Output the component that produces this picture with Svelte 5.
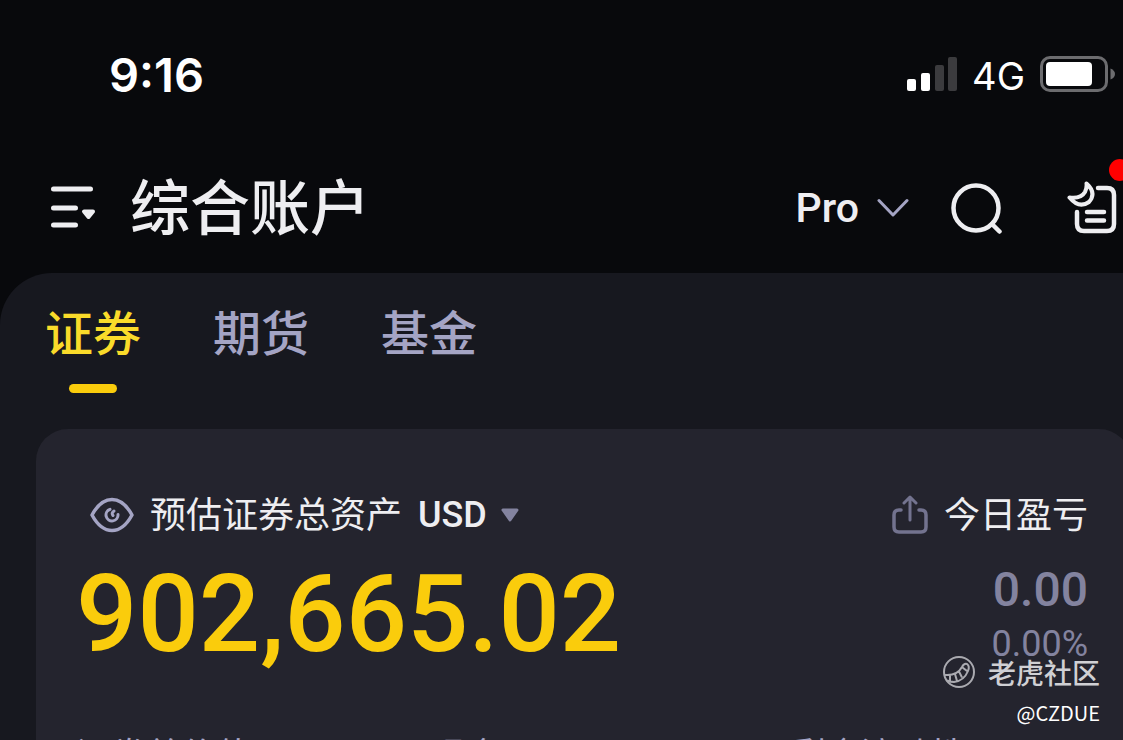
<script lang="ts">
  const tabs = ['证券', '期货', '基金'];
  let active = $state(0);
  const metrics = ['证券总价值', '现金', '剩余流动性'];
</script>

<div class="screen">
  <div class="status">
    <span class="time">9:16</span>
    <div class="signals">
      <svg width="52" height="36" viewBox="0 0 52 36" aria-hidden="true">
        <rect x="2" y="23" width="9" height="12" rx="2" fill="#fff" />
        <rect x="16" y="17" width="9" height="18" rx="2" fill="#fff" />
        <rect x="30" y="9" width="9" height="26" rx="2" fill="#3b3b3e" />
        <rect x="43" y="1" width="9" height="34" rx="2" fill="#3b3b3e" />
      </svg>
      <span class="network">4G</span>
      <svg width="75" height="36" viewBox="0 0 75 36" aria-hidden="true">
        <rect x="1.5" y="1.5" width="65" height="33" rx="8.5" fill="none" stroke="#6c6c6f" stroke-width="3" />
        <rect x="6" y="6" width="46" height="24" rx="4" fill="#fff" />
        <path d="M70.500 12.500Q75 14.500 75 18T70.500 23.500Z" fill="#6c6c6f" />
      </svg>
    </div>
  </div>

  <header>
    <button class="icon" aria-label="Menu">
      <svg width="46" height="44" viewBox="0 0 46 44" fill="none" stroke="#eeeef1" stroke-width="5" stroke-linecap="round">
        <path d="M3.500 3H40.500M3.500 22H25.500M3.500 39H25.500" />
        <path d="M34 25.500H43L38.500 31Z" fill="#eeeef1" stroke-width="4" stroke-linejoin="round" />
      </svg>
    </button>
    <h1>综合账户</h1>
    <div class="tools">
      <button class="mode">
        Pro
        <svg width="32" height="20" viewBox="0 0 32 20" fill="none" stroke="#a4a4c4" stroke-width="3" stroke-linecap="round" stroke-linejoin="round">
          <path d="M2 2.500L16 17L30 2.500" />
        </svg>
      </button>
      <button class="icon" aria-label="Search">
        <svg width="52" height="52" viewBox="0 0 52 52" fill="none" stroke="#eeeef1" stroke-width="4.500" stroke-linecap="round">
          <circle cx="26" cy="26" r="22.500" />
          <path d="M42 42L49.500 49.500" />
        </svg>
      </button>
      <button class="icon report" aria-label="Reports">
        <svg width="50" height="54" viewBox="0 0 50 54" fill="none" stroke="#eeeef1" stroke-width="4.500" stroke-linecap="round" stroke-linejoin="round">
          <path d="M31 7H40Q47 7 47 14V43Q47 50 40 50H17Q10 50 10 43V31" />
          <path d="M19.500 2.500Q30 12 22 21Q12 28 2.500 16.500Q14 18 18 11Q20 7 19.500 2.500Z" stroke-width="4" />
          <path d="M20 31H37M20 39.500H37" />
        </svg>
        <span class="dot"></span>
      </button>
    </div>
  </header>

  <main>
    <nav>
      {#each tabs as tab, i}
        <button class="tab" class:active={active === i} onclick={() => (active = i)}>{tab}</button>
      {/each}
    </nav>

    <section class="card">
      <div class="row">
        <div class="label">
          <button class="icon" aria-label="Hide balance">
            <svg width="44" height="36" viewBox="0 0 44 36" fill="none" stroke="#a4a4c4" stroke-width="3.500" stroke-linecap="round">
              <path d="M2 18C8 7 14 2.500 22 2.500S36 7 42 18C36 29 30 33.500 22 33.500S8 29 2 18Z" stroke-linejoin="round" />
              <path d="M20 12.300A6 6 0 1 0 28 17.500M24 14Q21 16 23 18.500" stroke-width="3" />
            </svg>
          </button>
          <span>预估证券总资产</span>
          <button class="currency">
            USD
            <svg width="18" height="14" viewBox="0 0 18 14"><path d="M2 2H16L9 12Z" fill="#83839f" stroke="#83839f" stroke-width="3" stroke-linejoin="round" /></svg>
          </button>
        </div>
        <div class="label">
          <button class="icon" aria-label="Share">
            <svg width="36" height="40" viewBox="0 0 36 40" fill="none" stroke="#73738f" stroke-width="3.500" stroke-linecap="round" stroke-linejoin="round">
              <path d="M9 15H7Q2 15 2 20V32Q2 37 7 37H29Q34 37 34 32V20Q34 15 29 15H27" />
              <path d="M18 25V3M12 8L18 2L24 8" stroke-width="3" />
            </svg>
          </button>
          <span>今日盈亏</span>
        </div>
      </div>
      <div class="row values">
        <strong class="total">902,665.02</strong>
        <div class="change">
          <strong>0.00</strong>
          <span>0.00%</span>
        </div>
      </div>
      <div class="metrics">
        {#each metrics as metric}<span>{metric}</span>{/each}
      </div>
    </section>
  </main>

  <div class="watermark">
    <div class="community">
      <svg width="34" height="34" viewBox="0 0 34 34" fill="none" stroke="#aaaab0" stroke-width="2">
        <circle cx="17" cy="17" r="15" />
        <path d="M3 20Q15 21 20 12Q22 8 25 9Q28 11 26 16Q22 26 12 27Q8 27 5 25.500M8 20.500V26M13 19L15 26M17 16.500L20 22.500M20.500 12.500L25 16" />
      </svg>
      <span>老虎社区</span>
    </div>
    <span class="author">@CZDUE</span>
  </div>
</div>

<style>
  :global(body) { background: #08090c; }
  .screen {
    position: relative;
    display: flex;
    flex-direction: column;
    height: 100vh;
    overflow: hidden;
    color: #eeeef1;
    background: #08090c;
    font-family: Roboto, "Noto Sans CJK SC", sans-serif;
  }
  button {
    display: flex;
    align-items: center;
    padding: 0;
    border: 0;
    background: none;
    color: inherit;
    font: inherit;
    cursor: pointer;
  }
  svg { display: block; flex: none; }
  .status {
    display: flex;
    align-items: center;
    justify-content: space-between;
    flex: none;
    height: 148px;
    padding: 0 8px 0 109px;
    color: #fff;
    font-family: Inter, sans-serif;
  }
  .time { font-size: 47px; font-weight: 600; }
  .signals { display: flex; align-items: center; gap: 15px; }
  .network { padding-top: 3px; font-size: 38px; font-weight: 400; }
  header {
    display: flex;
    align-items: center;
    flex: none;
    gap: 34px;
    height: 120px;
    padding: 0 6px 5px 50px;
  }
  h1 {
    flex: 1;
    margin: 0;
    padding-top: 4px;
    font-size: 60px;
    font-weight: 500;
    line-height: 80px;
  }
  .tools { display: flex; align-items: center; gap: 41px; }
  .tools .report { position: relative; margin-left: 24px; }
  .mode { gap: 18px; font-size: 41px; font-weight: 500; }
  .dot {
    position: absolute;
    top: -22px;
    right: -14px;
    width: 22px;
    height: 22px;
    border-radius: 50%;
    background: #f00;
  }
  main {
    flex: 1 0 auto;
    padding-left: 36px;
    border-radius: 52px 0 0 0;
    background: #17181f;
  }
  nav { display: flex; gap: 72px; height: 156px; padding: 26px 0 0 9px; box-sizing: border-box; }
  .tab {
    flex-direction: column;
    gap: 13px;
    height: 94px;
    color: #a4a4c4;
    font-size: 48px;
    font-weight: 500;
    line-height: 72px;
  }
  .tab.active { color: #fadb2a; }
  .tab.active::after {
    content: "";
    width: 48px;
    height: 9px;
    border-radius: 5px;
    background: #facc0c;
    flex: none;
  }
  .card {
    margin-right: -8px;
    padding: 60px 43px 0 40px;
    border-radius: 32px;
    background: #24242e;
  }
  .row { display: flex; justify-content: space-between; }
  .label { display: flex; align-items: center; gap: 16px; padding-left: 14px; font-size: 36px; line-height: 50px; }
  .label > span { padding-top: 2px; }
  .currency { gap: 14px; font-weight: 500; }
  .values { height: 191px; }
  .total { color: #facc0c; font-size: 108px; font-weight: 500; line-height: 146px; }
  .change {
    display: flex;
    flex-direction: column;
    align-items: flex-end;
    padding-top: 22px;
    color: #83839f;
    font-size: 36px;
    line-height: 54px;
  }
  .change strong { font-size: 48px; font-weight: 500; }
  .metrics { display: grid; grid-template-columns: 354fr 360fr 297fr; color: #a4a4c4; font-size: 35px; line-height: 50px; }
  .watermark {
    position: absolute;
    right: 23px;
    bottom: 11px;
    display: flex;
    flex-direction: column;
    align-items: flex-end;
    gap: 5px;
    color: #fff;
    font-family: "Noto Sans CJK SC", sans-serif;
  }
  .community { display: flex; align-items: center; gap: 12px; color: #d0d0d4; font-size: 28px; font-weight: 500; line-height: 40px; }
  .author { font-size: 20px; line-height: 32px; }
</style>
